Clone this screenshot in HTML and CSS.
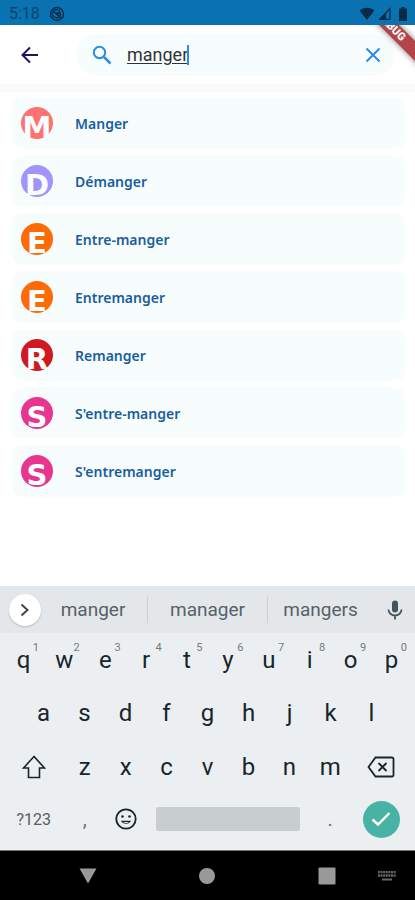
FILE: index.html
```html
<!DOCTYPE html>
<html lang="fr">
<head>
    <meta charset="UTF-8">
    <meta name="viewport" content="width=device-width, initial-scale=1.0">
    <title>manger</title>
    <link rel="stylesheet" href="styles.css">
</head>
<body>
    <div class="status-bar">
        <span class="time">5:18</span>
        <svg class="status-app" width="16" height="16" viewBox="0 0 16 16">
            <circle cx="8" cy="8" r="6.5" fill="none" stroke="currentColor" stroke-width="1.4"/>
            <path d="M4.5 10.5 A4 4 0 0 1 10.5 5 L11.5 8.500 A4 4 0 0 1 8 12Z M4 5l8 7" fill="none" stroke="currentColor" stroke-width="1.3"/>
            <circle cx="8.500" cy="7.500" r="1.600" fill="currentColor"/>
        </svg>
        <div class="status-icons">
            <svg width="16" height="14" viewBox="0 0 16 14"><path d="M0.500 3.500C5-.2 11-.2 15.500 3.500L8 13Z" fill="currentColor"/></svg>
            <svg width="14" height="14" viewBox="0 0 14 14"><path d="M1.500 12.300L12 1.500V12.300Z" fill="none" stroke="currentColor" stroke-width="1.200"/><path d="M1 12.800L8 5.500V12.800Z" fill="currentColor"/></svg>
            <svg class="battery" width="8" height="14" viewBox="0 0 8 14"><path d="M2.500 0h3v1.500H8V14H0V1.500h2.500Z" fill="currentColor"/></svg>
        </div>
    </div>

    <header class="app-bar">
        <button class="icon-btn back" aria-label="Retour">
            <svg width="18" height="18" viewBox="0 0 18 18"><path d="M17 9H2M9 1.500L1.500 9L9 16.500" fill="none" stroke="currentColor" stroke-width="2"/></svg>
        </button>
        <div class="search">
            <svg class="search-icon" width="20" height="20" viewBox="0 0 20 20"><circle cx="7.500" cy="7.500" r="5.700" fill="none" stroke="currentColor" stroke-width="2"/><path d="M12 12L18.500 18.500" stroke="currentColor" stroke-width="2.500"/></svg>
            <div class="search-field">
                <input type="text" value="manger" aria-label="Rechercher un verbe" spellcheck="false">
                <span class="caret"></span>
            </div>
            <button class="icon-btn clear" aria-label="Effacer">
                <svg width="16" height="16" viewBox="0 0 16 16"><path d="M1.500 1.500l13 13M14.500 1.500l-13 13" fill="none" stroke="currentColor" stroke-width="2"/></svg>
            </button>
        </div>
    </header>
    <div class="ribbon-corner"><div class="ribbon">DEBUG</div></div>

    <main>
        <ul class="verbs">
            <li><a href="#" class="verb"><span class="badge coral">M</span>Manger</a></li>
            <li><a href="#" class="verb"><span class="badge violet">D</span>Démanger</a></li>
            <li><a href="#" class="verb"><span class="badge orange">E</span>Entre-manger</a></li>
            <li><a href="#" class="verb"><span class="badge orange">E</span>Entremanger</a></li>
            <li><a href="#" class="verb"><span class="badge red">R</span>Remanger</a></li>
            <li><a href="#" class="verb"><span class="badge pink">S</span>S'entre-manger</a></li>
            <li><a href="#" class="verb"><span class="badge pink">S</span>S'entremanger</a></li>
        </ul>
    </main>

    <div class="keyboard">
        <div class="suggestions">
            <button class="expand" aria-label="Plus">
                <svg width="10" height="14" viewBox="0 0 10 14"><path d="M1.500 1.500L7.500 7L1.500 12.500" fill="none" stroke="currentColor" stroke-width="2"/></svg>
            </button>
            <div class="words">
                <button>manger</button>
                <button>manager</button>
                <button>mangers</button>
            </div>
            <button class="mic" aria-label="Dictée">
                <svg width="16" height="20" viewBox="0 0 16 20"><rect x="5" y="0.500" width="6" height="12" rx="3" fill="currentColor"/><path d="M1.500 9.500a6.500 6 0 0 0 13 0M8 15.500V19.500" fill="none" stroke="currentColor" stroke-width="1.800"/></svg>
            </button>
        </div>

        <div class="row">
            <button>q<sup>1</sup></button>
            <button>w<sup>2</sup></button>
            <button>e<sup>3</sup></button>
            <button>r<sup>4</sup></button>
            <button>t<sup>5</sup></button>
            <button>y<sup>6</sup></button>
            <button>u<sup>7</sup></button>
            <button>i<sup>8</sup></button>
            <button>o<sup>9</sup></button>
            <button>p<sup>0</sup></button>
        </div>
        <div class="row middle">
            <button>a</button>
            <button>s</button>
            <button>d</button>
            <button>f</button>
            <button>g</button>
            <button>h</button>
            <button>j</button>
            <button>k</button>
            <button>l</button>
        </div>
        <div class="row third">
            <button aria-label="Majuscule">
                <svg width="24" height="24" viewBox="0 0 24 24"><path d="M12 1.500L1.500 13H6.500V22.500H17.500V13H22.500Z" fill="none" stroke="currentColor" stroke-width="1.600"/></svg>
            </button>
            <button>z</button>
            <button>x</button>
            <button>c</button>
            <button>v</button>
            <button>b</button>
            <button>n</button>
            <button>m</button>
            <button aria-label="Supprimer">
                <svg width="28" height="22" viewBox="0 0 28 22"><path d="M8.500 1.500H25a1.500 1.500 0 0 1 1.500 1.500V19a1.500 1.500 0 0 1-1.500 1.500H8.500L1.500 11Z" fill="none" stroke="currentColor" stroke-width="1.800"/><path d="M11.500 7l8 8M19.500 7l-8 8" stroke="currentColor" stroke-width="1.800"/></svg>
            </button>
        </div>
        <div class="row bottom">
            <button class="symbols">?123</button>
            <button class="mark">,</button>
            <button aria-label="Emoji">
                <svg width="22" height="22" viewBox="0 0 22 22"><circle cx="11" cy="11" r="9.700" fill="none" stroke="currentColor" stroke-width="1.800"/><circle cx="7.500" cy="8.500" r="1.300" fill="currentColor"/><circle cx="14.500" cy="8.500" r="1.300" fill="currentColor"/><path d="M6 12.800h10a5.300 4.500 0 0 1-10 0Z" fill="currentColor"/><path d="M8 14h6a3.500 2 0 0 1-6 0Z" fill="#eceff1"/></svg>
            </button>
            <button class="space" aria-label="Espace"></button>
            <button class="mark">.</button>
            <button class="enter" aria-label="Valider">
                <svg width="20" height="16" viewBox="0 0 20 16"><path d="M1.500 8.500L7 13.500L18.500 2" fill="none" stroke="#fff" stroke-width="2.400"/></svg>
            </button>
        </div>
    </div>

    <nav class="nav-bar">
        <button aria-label="Fermer le clavier"><svg width="20" height="16" viewBox="0 0 20 16"><path d="M1.500 0.500H18.500L10 15.500Z" fill="currentColor"/></svg></button>
        <button aria-label="Accueil"><svg width="16" height="16" viewBox="0 0 16 16"><circle cx="8" cy="8" r="8" fill="currentColor"/></svg></button>
        <button aria-label="Applications"><svg width="18" height="18" viewBox="0 0 18 18"><rect x="0.500" y="0.500" width="17" height="17" rx="1" fill="currentColor"/></svg></button>
        <button class="switch" aria-label="Changer de clavier"><svg width="18" height="10" viewBox="0 0 18 10"><path d="M0 1H18M0 4.500H18" stroke="currentColor" stroke-width="2.400" stroke-dasharray="2 0.600"/><path d="M4 8.500H14" stroke="currentColor" stroke-width="2"/></svg></button>
    </nav>
</body>
</html>
```
FILE: styles.css
```css
* {
    box-sizing: border-box;
}

body {
    font-family: Roboto, "Liberation Sans", sans-serif;
    display: flex;
    flex-direction: column;
    min-height: 100vh;
    margin: 0;
    background: #fff;
    position: relative;
    overflow-x: hidden;
}

button {
    display: flex;
    align-items: center;
    justify-content: center;
    border: none;
    padding: 0;
    background: none;
    font-family: inherit;
    color: inherit;
    cursor: pointer;
}

.status-bar {
    display: flex;
    align-items: center;
    height: 25px;
    padding: 2px 8px 0 9px;
    background: #0a72b1;
    color: #062c49;
    position: relative;
    z-index: 2;
}

.time {
    font-size: 16px;
    width: 40px;
    color: #0a4570;
}

.status-icons {
    display: flex;
    gap: 3px;
    margin-left: auto;
}

.battery {
    margin-left: 4px;
}

.app-bar {
    display: flex;
    align-items: center;
    height: 59px;
    padding: 0 20px 0 10px;
}

.icon-btn {
    width: 40px;
    height: 40px;
}

.back {
    color: #1d1464;
    margin-right: 26px;
}

.search {
    display: flex;
    align-items: center;
    flex: 1;
    height: 42px;
    padding: 0 2px 0 16px;
    border-radius: 21px;
    background: #f7fdfd;
    color: #2a8be8;
}

.search-field {
    display: flex;
    align-items: center;
    flex: 1;
    margin-left: 15px;
    position: relative;
}

.search-field input {
    width: 100%;
    border: none;
    padding: 0;
    outline: none;
    background: none;
    font-family: inherit;
    font-size: 18px;
    color: #333;
    text-decoration: underline;
    text-underline-offset: 2px;
}

.caret {
    position: absolute;
    left: 60px;
    width: 2px;
    height: 20px;
    background: #2a8be8;
}

.ribbon-corner {
    position: absolute;
    top: 0;
    right: 0;
    width: 80px;
    height: 80px;
    overflow: hidden;
    pointer-events: none;
    z-index: 1;
}

.ribbon {
    position: absolute;
    top: 20px;
    right: -36px;
    width: 120px;
    transform: rotate(45deg);
    background: #b24548;
    box-shadow: 0 0 6px rgba(0, 0, 0, 0.5);
    color: #fff;
    font-size: 11px;
    font-weight: 900;
    line-height: 14px;
    text-align: center;
}

main {
    flex: 1;
    border-top: 8px solid #fafafa;
}

.verbs {
    display: flex;
    flex-direction: column;
    gap: 6px;
    list-style: none;
    margin: 0;
    padding: 5px 10px 5px 12px;
}

.verb {
    display: flex;
    align-items: center;
    gap: 22px;
    height: 52px;
    padding: 0 9px;
    border-radius: 10px;
    background: #f7fdfd;
    color: #1a5e9c;
    font-family: "Noto Sans", sans-serif;
    font-size: 14px;
    font-weight: 600;
    text-decoration: none;
}

.badge {
    width: 32px;
    height: 32px;
    border-radius: 50%;
    display: flex;
    justify-content: center;
    color: #f9fefe;
    font-family: "DejaVu Sans", sans-serif;
    font-size: 29px;
    font-weight: bold;
    line-height: 40px;
}

.coral {
    background: #ff7272;
}

.violet {
    background: #a394fb;
}

.orange {
    background: #ff6a05;
}

.red {
    background: #d01920;
}

.pink {
    background: #e8358f;
}

.keyboard {
    background: #eceff1;
    color: #17262d;
}

.suggestions {
    display: flex;
    align-items: center;
    height: 47px;
    padding: 0 4px 0 9px;
    background: #e4e7e9;
    color: #55626a;
}

.expand {
    width: 32px;
    height: 32px;
    border-radius: 50%;
    background: #fff;
    box-shadow: 0 1px 2px rgba(0, 0, 0, 0.2);
    color: #444;
    position: relative;
    z-index: 1;
}

.words {
    display: grid;
    grid-template-columns: repeat(3, 1fr);
    flex: 1;
    margin-right: -8px;
    margin-left: -14px;
}

.words button {
    height: 26px;
    font-size: 19px;
}

.words button:first-child {
    padding-left: 12px;
}

.words button:last-child {
    padding-right: 14px;
}

.words button + button {
    border-left: 1px solid #ccd1d4;
}

.mic {
    width: 32px;
    height: 32px;
    color: #44555e;
}

.row {
    display: grid;
    grid-template-columns: repeat(10, 1fr);
    height: 53px;
    padding: 0 3px;
}

.row button {
    font-size: 24px;
    position: relative;
}

.row sup {
    position: absolute;
    top: 9px;
    right: 5px;
    font-size: 11px;
    line-height: 12px;
    color: #727b80;
}

.middle {
    grid-template-columns: repeat(9, 1fr);
    padding: 0 23px;
}

.third {
    grid-template-columns: 3fr repeat(7, 2fr) 3fr;
    height: 55px;
}

.bottom {
    grid-template-columns: 3fr 2fr 2fr 8fr 2fr 3fr;
    height: 56px;
    padding-bottom: 6px;
}

.row .symbols {
    font-size: 16px;
    color: #555e63;
}

.row .mark {
    color: #6b7479;
    font-size: 20px;
}

.row .space {
    align-self: center;
    height: 24px;
    margin: 0 10px;
    border-radius: 2px;
    background: #c8cdcf;
}

.row .enter {
    align-self: center;
    justify-self: center;
    width: 37px;
    height: 37px;
    border-radius: 50%;
    background: #48b3a5;
}

.nav-bar {
    display: grid;
    grid-template-columns: 28px repeat(3, 1fr) 28px;
    height: 50px;
    background: #000;
    border-top: 1px solid #777;
    color: #999;
    position: relative;
}

.nav-bar button:first-child {
    grid-column: 2;
}

.nav-bar .switch {
    position: absolute;
    top: 0;
    right: 8px;
    width: 40px;
    height: 100%;
    color: #666;
}
```
